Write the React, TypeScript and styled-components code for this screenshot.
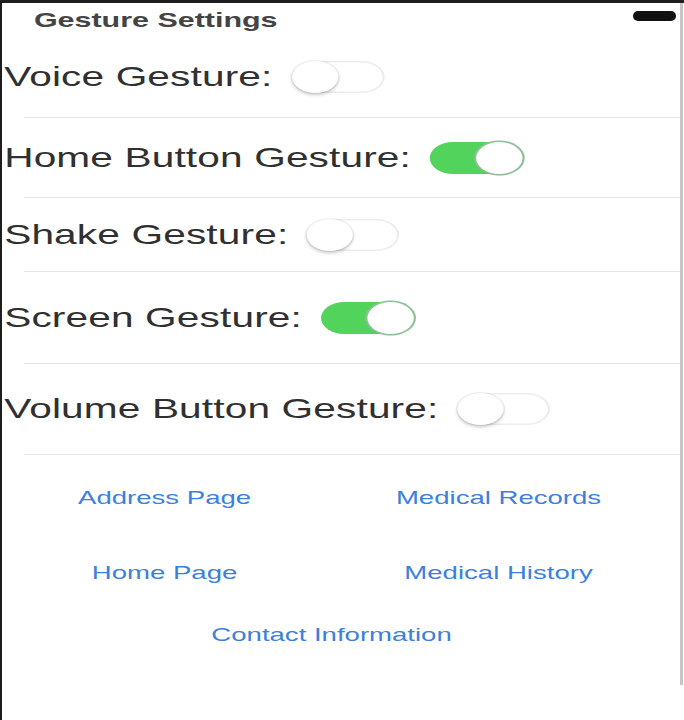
import React from "react";
import styled, { createGlobalStyle } from "styled-components";

const GlobalStyle = createGlobalStyle`
  html, body { margin: 0; padding: 0; background: #ffffff; }
  body { font-family: "Liberation Sans", Arial, sans-serif; }
  * { box-sizing: border-box; }
`;

const SCALE = 1.45;

const Frame = styled.div`
  width: 684px;
  height: 720px;
  display: flex;
  background: #ffffff;
  border-top: 3px solid #1e1e1e;
  border-left: 2px solid #1e1e1e;
`;

const Screen = styled.div`
  position: relative;
  width: 681px;
  height: 682px;
  border-right: 3px solid #c6c6c6;
  overflow: hidden;
`;

const StatusPill = styled.div`
  position: absolute;
  left: 631px;
  top: 8px;
  width: 43px;
  height: 10px;
  border-radius: 5px;
  background: #111111;
`;

const Content = styled.div`
  width: ${678 / SCALE}px;
  transform: scaleX(${SCALE});
  transform-origin: 0 0;
  display: flex;
  flex-direction: column;
`;

const Header = styled.div`
  height: 34px;
  display: flex;
  align-items: center;
  padding-left: 22px;
  font-size: 21px;
  font-weight: bold;
  color: #444444;
`;

const Row = styled.div<{ $h: number }>`
  height: ${(p) => p.$h}px;
  display: flex;
  align-items: center;
  gap: 13px;
  padding-left: 1.5px;
`;

const Label = styled.span`
  font-size: 28px;
  color: #303030;
  white-space: nowrap;
  letter-spacing: 0.1px;
`;

const Divider = styled.div`
  height: 1px;
  margin-left: 15px;
  background: #e4e4e4;
`;

const Track = styled.span<{ $on: boolean }>`
  position: relative;
  flex: none;
  width: 64px;
  height: 32px;
  border-radius: 16px;
  background: ${(p) => (p.$on ? "#52d35c" : "#ffffff")};
  box-shadow: ${(p) => (p.$on ? "none" : "inset 0 0 0 1.5px #ededed")};

  &::after {
    content: "";
    position: absolute;
    top: 0;
    left: ${(p) => (p.$on ? "32px" : "0")};
    width: 32px;
    height: 32px;
    border-radius: 50%;
    background: #ffffff;
    box-shadow: ${(p) =>
      p.$on
        ? "0 0 0 1.5px #8fbf94, 0 1px 2px rgba(0,0,0,0.15)"
        : "0 2px 3px rgba(0,0,0,0.22), 0 0 0 1px rgba(0,0,0,0.05)"};
  }
`;

const LinkGrid = styled.div`
  display: grid;
  grid-template-columns: 1fr 1fr;
  grid-template-rows: 86px 64px 60px;
  align-items: center;
  justify-items: center;
  padding-right: 10px;
  margin-left: -3px;
`;

const NavLink = styled.a<{ $wide?: boolean }>`
  grid-column: ${(p) => (p.$wide ? "1 / span 2" : "auto")};
  font-size: 19px;
  color: #3d7fdc;
  text-decoration: none;
  white-space: nowrap;
  cursor: pointer;
`;

type Gesture = { label: string; on: boolean; h: number };

const gestures: Gesture[] = [
  { label: "Voice Gesture:", on: false, h: 80 },
  { label: "Home Button Gesture:", on: true, h: 79 },
  { label: "Shake Gesture:", on: false, h: 73 },
  { label: "Screen Gesture:", on: true, h: 91 },
  { label: "Volume Button Gesture:", on: false, h: 90 },
];

export default function App() {
  return (
    <>
      <GlobalStyle />
      <Frame>
        <Screen>
          <StatusPill />
          <Content>
            <Header>Gesture Settings</Header>
            {gestures.map((g) => (
              <React.Fragment key={g.label}>
                <Row $h={g.h}>
                  <Label>{g.label}</Label>
                  <Track $on={g.on} />
                </Row>
                <Divider />
              </React.Fragment>
            ))}
            <LinkGrid>
              <NavLink>Address Page</NavLink>
              <NavLink>Medical Records</NavLink>
              <NavLink>Home Page</NavLink>
              <NavLink>Medical History</NavLink>
              <NavLink $wide>Contact Information</NavLink>
            </LinkGrid>
          </Content>
        </Screen>
      </Frame>
    </>
  );
}
